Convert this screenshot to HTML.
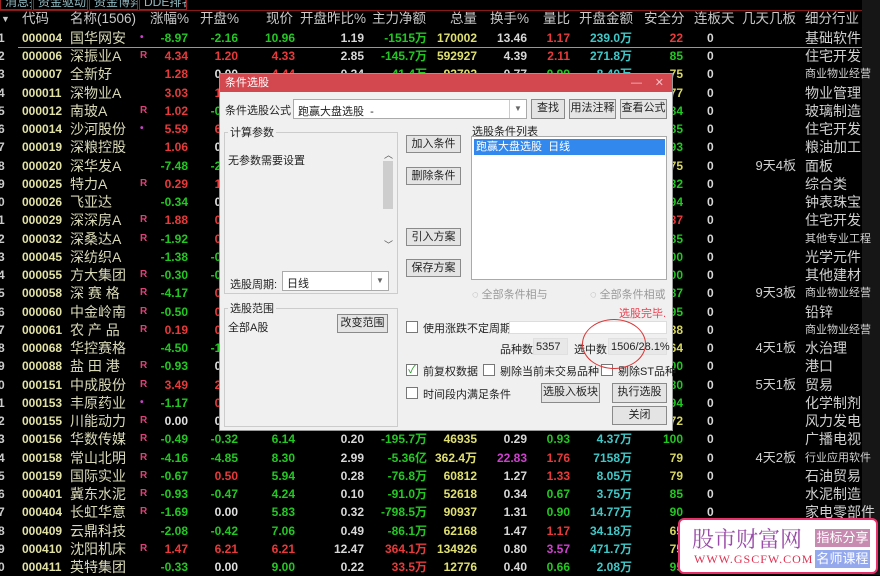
<!DOCTYPE html>
<html><head><meta charset="utf-8"><style>
*{margin:0;padding:0;box-sizing:border-box}
body{width:880px;height:575px;background:#000;position:relative;overflow:hidden;font-family:"Liberation Sans","Noto Sans CJK SC",sans-serif}
.strip{position:absolute;left:862px;top:0;width:18px;height:575px;background:#161616}
.tab{position:absolute;top:-4px;height:14px;border:1px solid #a02020;border-top:none;color:#8fb8c0;font-size:12px;line-height:12px;padding-left:4px;white-space:nowrap;overflow:hidden}
.hline{position:absolute;left:0;width:862px;height:1px}
.r{position:absolute;left:0;width:862px;height:18px;line-height:18px;font-size:12px;white-space:nowrap}
.r span{position:absolute;top:0;font-weight:bold}
.r span:nth-child(1){left:-2px;width:10px;color:#ccc}
.r span:nth-child(2){left:22px;color:#e2e2a4}
.r span:nth-child(3){left:70px;font-size:14px;font-weight:normal;color:#d9d9b8;letter-spacing:0}
.r span:nth-child(4){left:140px;color:#e0407a;font-size:10px}
.r span:nth-child(5){left:140px;width:48px;text-align:right}
.r span:nth-child(6){left:190px;width:48px;text-align:right}
.r span:nth-child(7){left:240px;width:55px;text-align:right}
.r span:nth-child(8){left:300px;width:64px;text-align:right;color:#d8d8d8}
.r span:nth-child(9){left:360px;width:67px;text-align:right}
.r span:nth-child(10){left:425px;width:52px;text-align:right;color:#e0e070}
.r span:nth-child(11){left:480px;width:47px;text-align:right;color:#d8d8d8}
.r span:nth-child(12){left:530px;width:40px;text-align:right}
.r span:nth-child(13){left:572px;width:60px;text-align:right;color:#40c8c8}
.r span:nth-child(14){left:640px;width:43px;text-align:right}
.r span:nth-child(15){left:707px;color:#d8d8d8}
.r span:nth-child(16){left:730px;width:66px;text-align:right;font-weight:normal;font-size:13px;color:#d0d0d0}
.r span:nth-child(17){left:805px;font-weight:normal;font-size:14px;color:#d0d0d0}
.r span.s{font-size:11px !important}
.hd{position:absolute;top:10px;height:18px;line-height:18px;font-size:13.5px;color:#c8c8c8;white-space:nowrap}
.g{color:#22c822 !important}.d{color:#e83a3a !important}.w{color:#e0e0e0 !important}.y{color:#d8d860 !important}.m{color:#d040d0 !important}
.dlg{position:absolute;left:219px;top:73px;width:454px;height:358px;background:#f0f0f0;border:1px solid #999;font-size:11px;color:#222}
.dlg *{position:absolute;white-space:nowrap}
.tt{left:0;top:0;width:452px;height:18px;background:#d3474f;color:#fff;line-height:18px;padding-left:5px}
.btn{background:#e4e4e4;border:1px solid #8a8a8a;text-align:center;line-height:17px;font-size:11px}
.box{background:#fff;border:1px solid #aaa}
.grp{border:1px solid #ccc}
.lb{background:#f0f0f0;padding:0 2px;line-height:14px}
.cb{width:12px;height:12px;border:1px solid #777;background:#fff}
.gray{color:#999}
</style></head><body>
<div class="strip"></div>
<div class="tab" style="left:0;width:32px">消息排行</div>
<div class="tab" style="left:33px;width:55px">资金驱动力</div>
<div class="tab" style="left:89px;width:49px">资金博弈</div>
<div class="tab" style="left:139px;width:48px">DDE排名</div>
<div class="hline" style="top:10px;background:#8a1a1a"></div>
<div class="hd" style="left:1px;font-size:9px">▼</div>
<div class="hd" style="left:22px">代码</div>
<div class="hd" style="left:70px">名称(1506)</div>
<div class="hd" style="left:150px">涨幅%</div>
<div class="hd" style="left:200px">开盘%</div>
<div class="hd" style="left:266px">现价</div>
<div class="hd" style="left:300px">开盘昨比%</div>
<div class="hd" style="left:372px">主力净额</div>
<div class="hd" style="left:450px">总量</div>
<div class="hd" style="left:490px">换手%</div>
<div class="hd" style="left:543px">量比</div>
<div class="hd" style="left:579px">开盘金额</div>
<div class="hd" style="left:644px">安全分</div>
<div class="hd" style="left:694px">连板天</div>
<div class="hd" style="left:742px">几天几板</div>
<div class="hd" style="left:805px">细分行业</div>
<div class="hline" style="top:47px;left:18px;width:844px;background:#a0a050"></div>

<div class="r" style="top:29px"><span>1</span><span>000004</span><span>国华网安</span><span class="m">•</span><span class="g">-8.97</span><span class="g">-2.16</span><span class="g">10.96</span><span>1.19</span><span class="g">-1515万</span><span>170002</span><span>13.46</span><span class="d">1.17</span><span>239.0万</span><span class="d">22</span><span>0</span><span></span><span>基础软件</span></div>
<div class="r" style="top:47px"><span>2</span><span>000006</span><span>深振业A</span><span>R</span><span class="d">4.34</span><span class="d">1.20</span><span class="d">4.33</span><span>2.85</span><span class="g">-145.7万</span><span>592927</span><span>4.39</span><span class="d">2.11</span><span>271.8万</span><span class="g">85</span><span>0</span><span></span><span>住宅开发</span></div>
<div class="r" style="top:65px"><span>3</span><span>000007</span><span>全新好</span><span></span><span class="d">1.28</span><span class="w">0.00</span><span class="d">4.44</span><span>0.34</span><span class="g">-41.4万</span><span>92702</span><span>0.77</span><span class="g">0.99</span><span>8.40万</span><span class="y">75</span><span>0</span><span></span><span class="s">商业物业经营</span></div>
<div class="r" style="top:84px"><span>4</span><span>000011</span><span>深物业A</span><span></span><span class="d">3.03</span><span class="d">1.60</span><span></span><span></span><span></span><span></span><span></span><span></span><span></span><span class="y">77</span><span>0</span><span></span><span>物业管理</span></div>
<div class="r" style="top:102px"><span>5</span><span>000012</span><span>南玻A</span><span>R</span><span class="d">1.02</span><span class="g">-0.22</span><span></span><span></span><span></span><span></span><span></span><span></span><span></span><span class="g">84</span><span>0</span><span></span><span>玻璃制造</span></div>
<div class="r" style="top:120px"><span>6</span><span>000014</span><span>沙河股份</span><span class="m">•</span><span class="d">5.59</span><span class="d">6.00</span><span></span><span></span><span></span><span></span><span></span><span></span><span></span><span class="g">85</span><span>0</span><span></span><span>住宅开发</span></div>
<div class="r" style="top:138px"><span>7</span><span>000019</span><span>深粮控股</span><span></span><span class="d">1.06</span><span class="w">0.00</span><span></span><span></span><span></span><span></span><span></span><span></span><span></span><span class="g">93</span><span>0</span><span></span><span>粮油加工</span></div>
<div class="r" style="top:157px"><span>8</span><span>000020</span><span>深华发A</span><span></span><span class="g">-7.48</span><span class="g">-2.50</span><span></span><span></span><span></span><span></span><span></span><span></span><span></span><span class="y">75</span><span>0</span><span>9天4板</span><span>面板</span></div>
<div class="r" style="top:175px"><span>9</span><span>000025</span><span>特力A</span><span>R</span><span class="d">0.29</span><span class="d">1.00</span><span></span><span></span><span></span><span></span><span></span><span></span><span></span><span class="g">32</span><span>0</span><span></span><span>综合类</span></div>
<div class="r" style="top:193px"><span>0</span><span>000026</span><span>飞亚达</span><span></span><span class="g">-0.34</span><span class="w">0.00</span><span></span><span></span><span></span><span></span><span></span><span></span><span></span><span class="g">94</span><span>0</span><span></span><span>钟表珠宝</span></div>
<div class="r" style="top:211px"><span>1</span><span>000029</span><span>深深房A</span><span>R</span><span class="d">1.88</span><span class="d">0.50</span><span></span><span></span><span></span><span></span><span></span><span></span><span></span><span class="d">37</span><span>0</span><span></span><span>住宅开发</span></div>
<div class="r" style="top:230px"><span>2</span><span>000032</span><span>深桑达A</span><span>R</span><span class="g">-1.92</span><span class="d">0.30</span><span></span><span></span><span></span><span></span><span></span><span></span><span></span><span class="g">85</span><span>0</span><span></span><span class="s">其他专业工程</span></div>
<div class="r" style="top:248px"><span>3</span><span>000045</span><span>深纺织A</span><span></span><span class="g">-1.38</span><span class="g">-0.50</span><span></span><span></span><span></span><span></span><span></span><span></span><span></span><span class="g">100</span><span>0</span><span></span><span>光学元件</span></div>
<div class="r" style="top:266px"><span>4</span><span>000055</span><span>方大集团</span><span>R</span><span class="g">-0.30</span><span class="g">-0.10</span><span></span><span></span><span></span><span></span><span></span><span></span><span></span><span class="g">100</span><span>0</span><span></span><span>其他建材</span></div>
<div class="r" style="top:284px"><span>5</span><span>000058</span><span>深 赛 格</span><span>R</span><span class="g">-4.17</span><span class="d">0.20</span><span></span><span></span><span></span><span></span><span></span><span></span><span></span><span class="g">87</span><span>0</span><span>9天3板</span><span class="s">商业物业经营</span></div>
<div class="r" style="top:303px"><span>6</span><span>000060</span><span>中金岭南</span><span>R</span><span class="g">-0.50</span><span class="d">0.10</span><span></span><span></span><span></span><span></span><span></span><span></span><span></span><span class="g">95</span><span>0</span><span></span><span>铅锌</span></div>
<div class="r" style="top:321px"><span>7</span><span>000061</span><span>农 产 品</span><span>R</span><span class="d">0.19</span><span class="d">0.50</span><span></span><span></span><span></span><span></span><span></span><span></span><span></span><span class="y">88</span><span>0</span><span></span><span class="s">商业物业经营</span></div>
<div class="r" style="top:339px"><span>8</span><span>000068</span><span>华控赛格</span><span></span><span class="g">-4.50</span><span class="g">-1.50</span><span></span><span></span><span></span><span></span><span></span><span></span><span></span><span class="y">64</span><span>0</span><span>4天1板</span><span>水治理</span></div>
<div class="r" style="top:357px"><span>9</span><span>000088</span><span>盐 田 港</span><span>R</span><span class="g">-0.93</span><span class="w">0.00</span><span></span><span></span><span></span><span></span><span></span><span></span><span></span><span class="g">100</span><span>0</span><span></span><span>港口</span></div>
<div class="r" style="top:376px"><span>0</span><span>000151</span><span>中成股份</span><span>R</span><span class="d">3.49</span><span class="d">2.00</span><span></span><span></span><span></span><span></span><span></span><span></span><span></span><span class="g">80</span><span>0</span><span>5天1板</span><span>贸易</span></div>
<div class="r" style="top:394px"><span>1</span><span>000153</span><span>丰原药业</span><span class="m">•</span><span class="g">-1.17</span><span class="d">0.50</span><span></span><span></span><span></span><span></span><span></span><span></span><span></span><span class="g">94</span><span>0</span><span></span><span>化学制剂</span></div>
<div class="r" style="top:412px"><span>2</span><span>000155</span><span>川能动力</span><span>R</span><span class="w">0.00</span><span class="w">0.00</span><span></span><span></span><span></span><span></span><span></span><span></span><span></span><span class="y">72</span><span>0</span><span></span><span>风力发电</span></div>
<div class="r" style="top:430px"><span>3</span><span>000156</span><span>华数传媒</span><span>R</span><span class="g">-0.49</span><span class="g">-0.32</span><span class="g">6.14</span><span>0.20</span><span class="g">-195.7万</span><span>46935</span><span>0.29</span><span class="g">0.93</span><span>4.37万</span><span class="g">100</span><span>0</span><span></span><span>广播电视</span></div>
<div class="r" style="top:449px"><span>4</span><span>000158</span><span>常山北明</span><span>R</span><span class="g">-4.16</span><span class="g">-4.85</span><span class="g">8.30</span><span>2.99</span><span class="g">-5.36亿</span><span>362.4万</span><span class="m">22.83</span><span class="d">1.76</span><span>7158万</span><span class="y">79</span><span>0</span><span>4天2板</span><span class="s">行业应用软件</span></div>
<div class="r" style="top:467px"><span>5</span><span>000159</span><span>国际实业</span><span>R</span><span class="g">-0.67</span><span class="d">0.50</span><span class="g">5.94</span><span>0.28</span><span class="g">-76.8万</span><span>60812</span><span>1.27</span><span class="d">1.33</span><span>8.05万</span><span class="y">79</span><span>0</span><span></span><span>石油贸易</span></div>
<div class="r" style="top:485px"><span>6</span><span>000401</span><span>冀东水泥</span><span>R</span><span class="g">-0.93</span><span class="g">-0.47</span><span class="g">4.24</span><span>0.10</span><span class="g">-91.0万</span><span>52618</span><span>0.34</span><span class="g">0.67</span><span>3.75万</span><span class="g">85</span><span>0</span><span></span><span>水泥制造</span></div>
<div class="r" style="top:503px"><span>7</span><span>000404</span><span>长虹华意</span><span>R</span><span class="g">-1.69</span><span class="w">0.00</span><span class="g">5.83</span><span>0.32</span><span class="g">-798.5万</span><span>90937</span><span>1.31</span><span class="g">0.90</span><span>14.77万</span><span class="g">90</span><span>0</span><span></span><span>家电零部件</span></div>
<div class="r" style="top:522px"><span>8</span><span>000409</span><span>云鼎科技</span><span></span><span class="g">-2.08</span><span class="g">-0.42</span><span class="g">7.06</span><span>0.49</span><span class="g">-86.1万</span><span>62168</span><span>1.47</span><span class="d">1.17</span><span>34.18万</span><span class="y">65</span><span>0</span><span></span><span></span></div>
<div class="r" style="top:540px"><span>9</span><span>000410</span><span>沈阳机床</span><span>R</span><span class="d">1.47</span><span class="d">6.21</span><span class="d">6.21</span><span>12.47</span><span class="d">364.1万</span><span>134926</span><span>0.80</span><span class="m">3.57</span><span>471.7万</span><span class="y">75</span><span>0</span><span></span><span></span></div>
<div class="r" style="top:558px"><span>0</span><span>000411</span><span>英特集团</span><span></span><span class="g">-0.33</span><span class="w">0.00</span><span class="g">9.00</span><span>0.22</span><span class="d">33.5万</span><span>12776</span><span>0.40</span><span class="g">0.66</span><span>2.08万</span><span class="g">95</span><span>0</span><span></span><span></span></div>

<div class="dlg">
 <div class="tt">条件选股<span style="right:30px;top:0;color:#f4c0c4">—</span><span style="right:8px;top:0;color:#f4c0c4">✕</span></div>
 <div style="left:5px;top:28px">条件选股公式</div>
 <div class="box" style="left:73px;top:25px;width:234px;height:20px;padding:3px 4px">跑赢大盘选股 &nbsp;-<span style="right:0;top:0;width:17px;height:18px;border-left:1px solid #ccc;text-align:center;font-size:8px;line-height:18px;color:#666">▼</span></div>
 <div class="btn" style="left:311px;top:25px;width:34px;height:20px">查找</div>
 <div class="btn" style="left:349px;top:25px;width:47px;height:20px">用法注释</div>
 <div class="btn" style="left:400px;top:25px;width:47px;height:20px">查看公式</div>
 <div class="grp" style="left:4px;top:58px;width:174px;height:162px"></div>
 <div class="lb" style="left:8px;top:52px">计算参数</div>
 <div style="left:8px;top:78px">无参数需要设置</div>
 <div style="left:162px;top:73px;width:12px;height:104px;background:#f0f0f0"></div>
 <div style="left:164px;top:74px;font-size:9px;color:#555">︿</div>
 <div style="left:163px;top:87px;width:10px;height:48px;background:#cdcdcd"></div>
 <div style="left:164px;top:164px;font-size:9px;color:#555">﹀</div>
 <div style="left:10px;top:202px">选股周期:</div>
 <div class="box" style="left:62px;top:197px;width:107px;height:20px;padding:3px 4px">日线<span style="right:0;top:0;width:17px;height:18px;border-left:1px solid #ccc;text-align:center;font-size:8px;line-height:18px;color:#666">▼</span></div>
 <div class="grp" style="left:4px;top:234px;width:174px;height:119px"></div>
 <div class="lb" style="left:8px;top:228px">选股范围</div>
 <div style="left:8px;top:245px">全部A股</div>
 <div class="btn" style="left:117px;top:240px;width:51px;height:19px">改变范围</div>
 <div class="btn" style="left:186px;top:61px;width:55px;height:18px">加入条件</div>
 <div class="btn" style="left:186px;top:93px;width:55px;height:18px">删除条件</div>
 <div class="btn" style="left:186px;top:154px;width:55px;height:18px">引入方案</div>
 <div class="btn" style="left:186px;top:185px;width:55px;height:18px">保存方案</div>
 <div style="left:252px;top:49px">选股条件列表</div>
 <div class="box" style="left:251px;top:62px;width:196px;height:144px"></div>
 <div style="left:254px;top:65px;width:191px;height:16px;background:#3388ee;color:#fff;line-height:16px;padding-left:2px">跑赢大盘选股 &nbsp;日线</div>
 <div class="gray" style="left:252px;top:212px">◌ 全部条件相与</div>
 <div class="gray" style="left:370px;top:212px">◌ 全部条件相或</div>
 <div style="left:399px;top:231px;color:#e84050">选股完毕.</div>
 <div class="cb" style="left:186px;top:247px"></div>
 <div style="left:203px;top:246px">使用涨跌不定周期</div>
 <div class="box" style="left:289px;top:247px;width:158px;height:13px;border-color:#ddd"></div>
 <div style="left:280px;top:267px">品种数</div>
 <div style="left:313px;top:264px;width:35px;height:17px;background:#e8e8e8;border:1px solid #e0e0e0;padding:2px 0 0 2px">5357</div>
 <div style="left:354px;top:267px">选中数</div>
 <div style="left:388px;top:264px;width:59px;height:17px;background:#e8e8e8;border:1px solid #e0e0e0;padding:2px 0 0 2px">1506/28.1%</div>
 <div class="cb" style="left:186px;top:290px;color:#2a9a2a;font-size:11px;line-height:10px;text-align:center">✓</div>
 <div style="left:203px;top:289px">前复权数据</div>
 <div class="cb" style="left:263px;top:290px"></div>
 <div style="left:280px;top:289px">剔除当前未交易品种</div>
 <div class="cb" style="left:381px;top:290px"></div>
 <div style="left:398px;top:289px">剔除ST品种</div>
 <div class="cb" style="left:186px;top:313px"></div>
 <div style="left:203px;top:312px">时间段内满足条件</div>
 <div class="btn" style="left:321px;top:309px;width:59px;height:20px">选股入板块</div>
 <div class="btn" style="left:392px;top:309px;width:55px;height:20px">执行选股</div>
 <div class="btn" style="left:392px;top:332px;width:55px;height:19px">关闭</div>
</div>
<div style="position:absolute;left:582px;top:319px;width:64px;height:50px;border:1.5px solid #d83838;border-radius:50%"></div>

<div style="position:absolute;left:678px;top:518px;width:200px;height:56px;background:#fff;border:2px solid #e8306a;border-radius:6px">
 <div style="position:absolute;left:12px;top:3px;font-size:22px;font-family:'Noto Serif CJK SC',serif;color:#9a4aa8;letter-spacing:0">股市财富网</div>
 <div style="position:absolute;left:14px;top:32px;font-size:12px;font-family:'Liberation Serif',serif;color:#e03050;letter-spacing:1px">WWW.GSCFW.COM</div>
 <div style="position:absolute;left:135px;top:9px;width:55px;height:18px;background:#c78ab0;color:#fff;font-size:13px;line-height:18px;text-align:center">指标分享</div>
 <div style="position:absolute;left:135px;top:30px;width:55px;height:18px;background:#94a8ee;color:#fff;font-size:13px;line-height:18px;text-align:center">名师课程</div>
</div>
</body></html>
